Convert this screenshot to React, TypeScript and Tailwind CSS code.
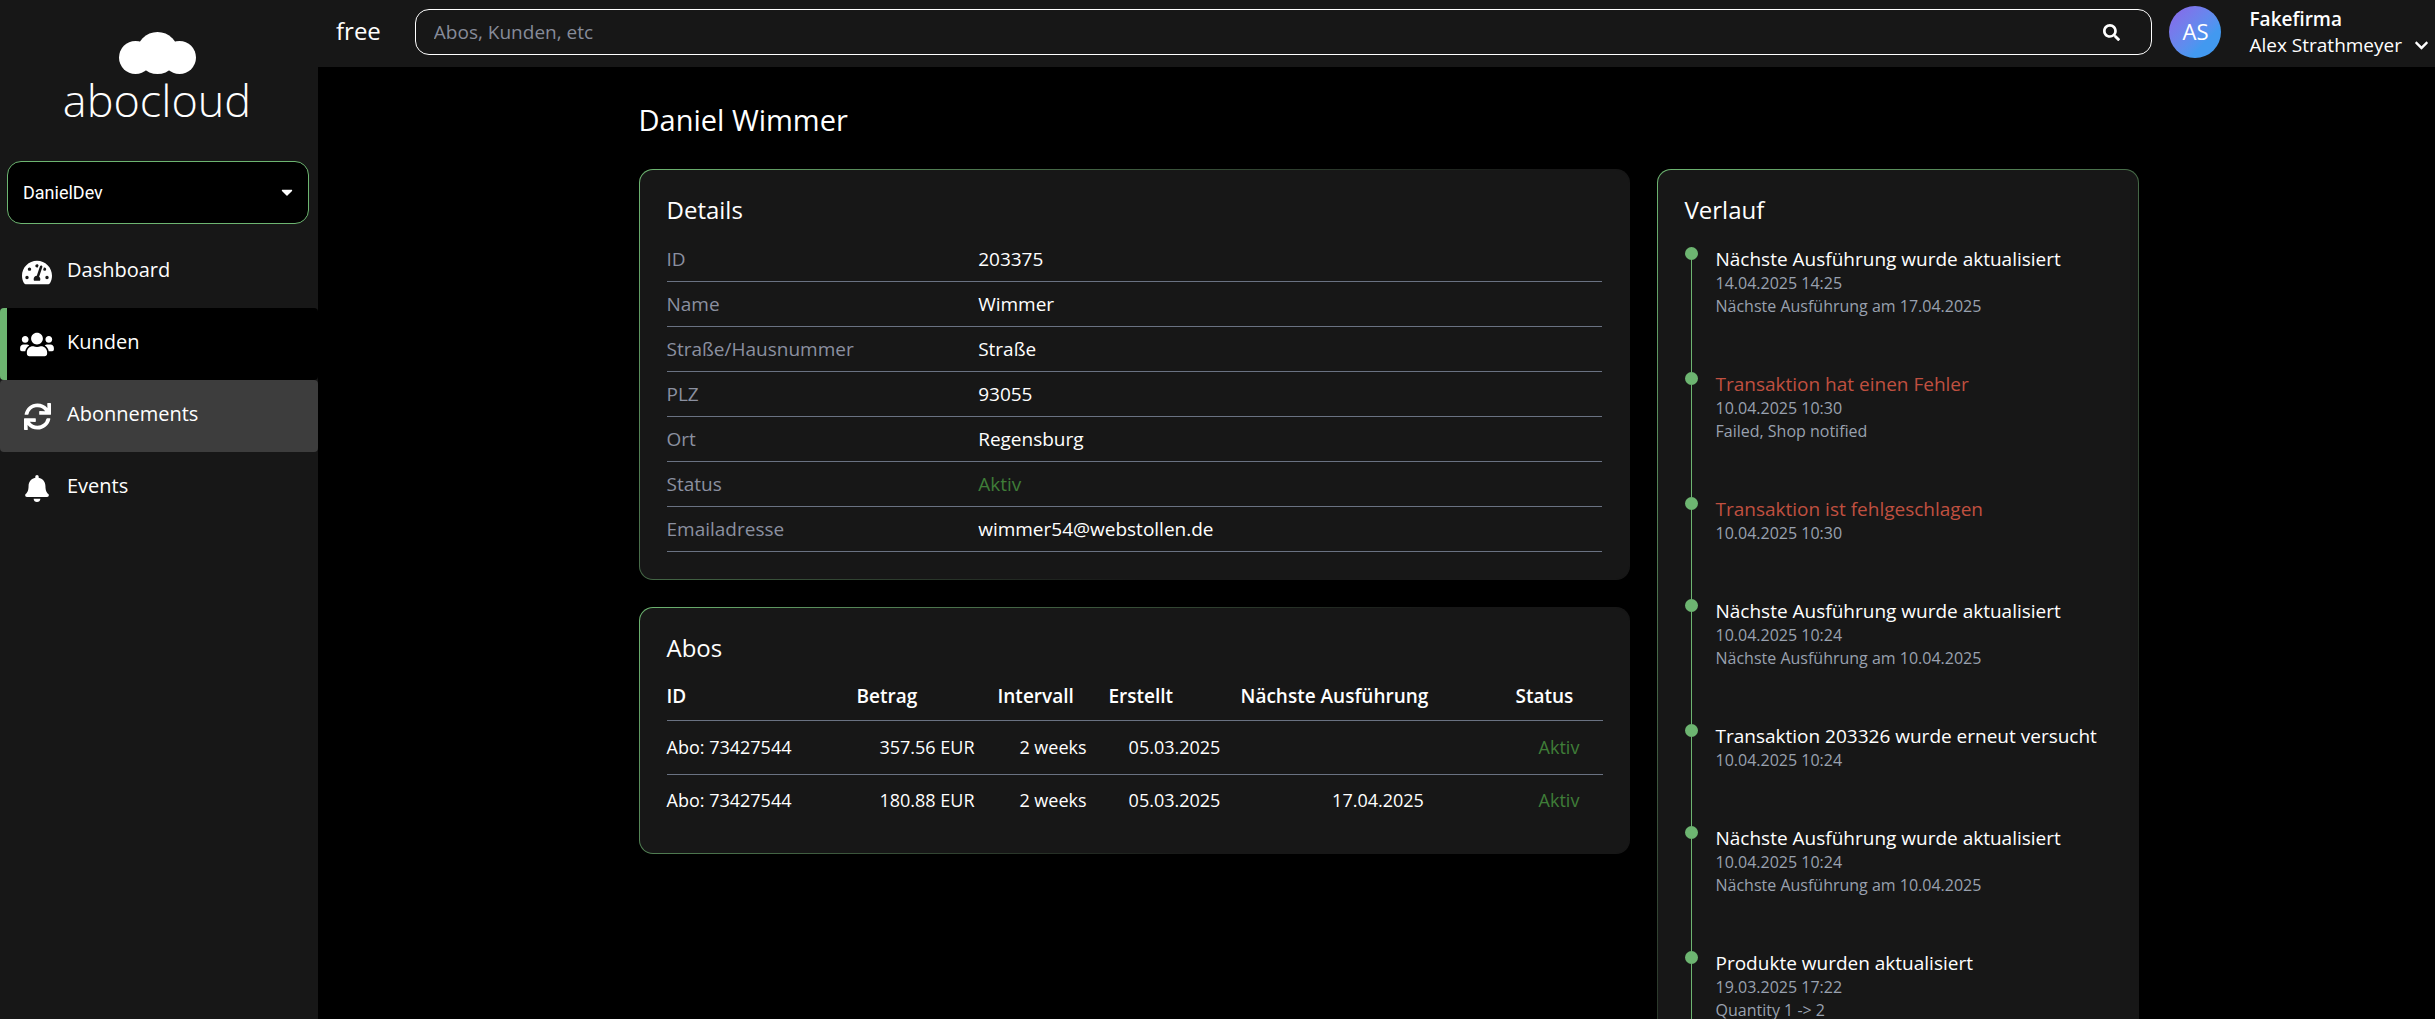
import type { ReactNode } from "react";
import clsx from "clsx";
import type { IconType } from "react-icons";
import {
  FaBell,
  FaCaretDown,
  FaChevronDown,
  FaSearch,
  FaSync,
  FaTachometerAlt,
  FaUsers,
} from "react-icons/fa";

interface NavItem {
  label: string;
  icon: IconType;
  iconClass: string;
  state?: "active" | "hover";
}

interface HistoryEntry {
  title: string;
  date: string;
  note?: string;
  failed?: boolean;
}

const navItems: NavItem[] = [
  { label: "Dashboard", icon: FaTachometerAlt, iconClass: "w-[30px]" },
  { label: "Kunden", icon: FaUsers, iconClass: "w-[34px]", state: "active" },
  { label: "Abonnements", icon: FaSync, iconClass: "w-[27px]", state: "hover" },
  { label: "Events", icon: FaBell, iconClass: "w-[24px]" },
];

const details = [
  { label: "ID", value: "203375" },
  { label: "Name", value: "Wimmer" },
  { label: "Straße/Hausnummer", value: "Straße" },
  { label: "PLZ", value: "93055" },
  { label: "Ort", value: "Regensburg" },
  { label: "Status", value: "Aktiv", active: true },
  { label: "Emailadresse", value: "wimmer54@webstollen.de" },
];

const subscriptions = [
  { id: "Abo: 73427544", amount: "357.56 EUR", interval: "2 weeks", created: "05.03.2025", next: "", status: "Aktiv" },
  { id: "Abo: 73427544", amount: "180.88 EUR", interval: "2 weeks", created: "05.03.2025", next: "17.04.2025", status: "Aktiv" },
];

const history: HistoryEntry[] = [
  { title: "Nächste Ausführung wurde aktualisiert", date: "14.04.2025 14:25", note: "Nächste Ausführung am 17.04.2025" },
  { title: "Transaktion hat einen Fehler", date: "10.04.2025 10:30", note: "Failed, Shop notified", failed: true },
  { title: "Transaktion ist fehlgeschlagen", date: "10.04.2025 10:30", failed: true },
  { title: "Nächste Ausführung wurde aktualisiert", date: "10.04.2025 10:24", note: "Nächste Ausführung am 10.04.2025" },
  { title: "Transaktion 203326 wurde erneut versucht", date: "10.04.2025 10:24" },
  { title: "Nächste Ausführung wurde aktualisiert", date: "10.04.2025 10:24", note: "Nächste Ausführung am 10.04.2025" },
  { title: "Produkte wurden aktualisiert", date: "19.03.2025 17:22", note: "Quantity 1 -> 2" },
];

function Logo() {
  return (
    <a href="#" className="flex flex-col items-center pr-1 pt-8" aria-label="abocloud">
      <svg viewBox="0 0 77 42" className="h-[42px] w-[77px] fill-white" aria-hidden="true">
        <circle cx="16.5" cy="25.5" r="16.5" />
        <circle cx="38.5" cy="21" r="21" />
        <circle cx="60.5" cy="25.5" r="16.5" />
      </svg>
      <span className="text-[45px] leading-[52px] font-light">abocloud</span>
    </a>
  );
}

function Sidebar() {
  return (
    <aside className="flex w-[318px] shrink-0 flex-col bg-[#171717]">
      <Logo />
      <div className="relative mt-[35px] mr-[9px] ml-[7px]">
        <select
          aria-label="Shop"
          className="h-[63px] w-full appearance-none rounded-[14px] border border-[#6db571] bg-black px-[15px] font-[Roboto,sans-serif] text-lg text-white"
        >
          <option>DanielDev</option>
        </select>
        <FaCaretDown className="pointer-events-none absolute top-[22px] right-[13px] h-[18px] w-[18px]" />
      </div>
      <nav className="mt-3">
        {navItems.map(({ label, icon: Icon, iconClass, state }) => (
          <a
            key={label}
            href="#"
            className={clsx(
              "flex h-[72px] items-center rounded border-l-[7px] pl-[13px]",
              state === "active" && "border-[#6db571] bg-black",
              state === "hover" && "border-[#3d3d3d] bg-[#3d3d3d]",
              !state && "border-transparent"
            )}
          >
            <span className="flex w-[34px] justify-center">
              <Icon className={clsx("h-[27px] shrink-0", iconClass)} />
            </span>
            <span className="ml-[13px] pb-1 text-xl font-medium">{label}</span>
          </a>
        ))}
      </nav>
    </aside>
  );
}

function Header() {
  return (
    <header className="flex h-[67px] shrink-0 items-center bg-[#171717] pr-[6px] pb-[3px] pl-[18px]">
      <span className="pb-0.5 text-2xl leading-6 font-medium">free</span>
      <form className="mr-[17px] ml-[34px] flex h-[46px] flex-1 items-center rounded-[14px] border border-white pr-[31px] pl-[18px]">
        <input
          type="search"
          aria-label="Suche"
          placeholder="Abos, Kunden, etc"
          className="h-full flex-1 bg-transparent text-[19px] outline-none placeholder:text-[#868b99]"
        />
        <button type="button" aria-label="Suchen">
          <FaSearch className="h-[17px] w-[17px]" />
        </button>
      </form>
      <span className="flex h-[52px] w-[52px] items-center justify-center rounded-full bg-linear-135 from-[#8a63e8] to-[#4299f0] to-70% pb-0.5 text-[22px] font-medium">
        AS
      </span>
      <button type="button" className="ml-7 flex items-end gap-3 text-left">
        <span className="flex flex-col text-[19px] leading-[26px]">
          <span className="font-semibold">Fakefirma</span>
          <span>Alex Strathmeyer</span>
        </span>
        <FaChevronDown className="mb-[5px] h-[15px] w-[15px]" />
      </button>
    </header>
  );
}

function Card({ title, className, children }: { title: string; className?: string; children: ReactNode }) {
  return (
    <section className="rounded-[14px] bg-linear-135 from-[#6db571] to-[#171717] to-65% p-px">
      <div className={clsx("rounded-[13px] bg-[#171717] p-[27px]", className)}>
        <h2 className="mb-[14px] text-2xl leading-[26px] font-medium">{title}</h2>
        {children}
      </div>
    </section>
  );
}

function DetailsCard() {
  return (
    <Card title="Details">
      <dl>
        {details.map((row) => (
          <div key={row.label} className="grid h-[45px] grid-cols-3 items-center border-b border-gray-500 text-[19px]">
            <dt className="text-[#8b90a0]">{row.label}</dt>
            <dd className={clsx("col-span-2", row.active && "text-[#3f7d38]")}>{row.value}</dd>
          </div>
        ))}
      </dl>
    </Card>
  );
}

function SubscriptionsCard() {
  return (
    <Card title="Abos">
      <table className="w-full table-fixed border-collapse text-lg">
        <thead>
          <tr className="h-[45px] border-b border-gray-500 text-left text-[19px]">
            <th className="w-[190px] font-semibold">ID</th>
            <th className="w-[141px] font-semibold">Betrag</th>
            <th className="w-[111px] font-semibold">Intervall</th>
            <th className="w-[132px] font-semibold">Erstellt</th>
            <th className="w-[275px] font-semibold">Nächste Ausführung</th>
            <th className="w-[87px] font-semibold">Status</th>
          </tr>
        </thead>
        <tbody>
          {subscriptions.map((sub, index) => (
            <tr key={index} className="h-[54px] border-b border-gray-500 text-center last:h-[52px] last:border-0">
              <td className="text-left">{sub.id}</td>
              <td>{sub.amount}</td>
              <td>{sub.interval}</td>
              <td>{sub.created}</td>
              <td>{sub.next}</td>
              <td className="text-[#3f7d38]">{sub.status}</td>
            </tr>
          ))}
        </tbody>
      </table>
    </Card>
  );
}

function HistoryCard() {
  return (
    <Card title="Verlauf" className="min-h-[1210px]">
      <ol className="mt-6">
        {history.map((entry, index) => (
          <li key={index} className="flex gap-[18px]">
            <span className="flex w-[13px] flex-col items-center" aria-hidden="true">
              <span className="h-[13px] w-[13px] shrink-0 rounded-full bg-[#6db571]" />
              <span className="w-px flex-1 bg-[#6db571]" />
            </span>
            <div className="pb-[54px] text-base leading-[23px] text-gray-400">
              <h3 className={clsx("text-[19px] leading-[25px]", entry.failed ? "text-[#c05040]" : "text-white")}>
                {entry.title}
              </h3>
              <p>{entry.date}</p>
              {entry.note && <p>{entry.note}</p>}
            </div>
          </li>
        ))}
      </ol>
    </Card>
  );
}

export default function App() {
  return (
    <div className="flex h-screen overflow-hidden bg-black font-['Open_Sans',sans-serif] text-white">
      <Sidebar />
      <div className="flex min-w-0 flex-1 flex-col">
        <Header />
        <main className="flex-1 overflow-hidden pl-6">
          <div className="mx-auto max-w-[1500px]">
            <h1 className="pt-[34px] text-[29px] leading-[38px]">Daniel Wimmer</h1>
            <div className="mt-[30px] grid grid-cols-3 items-start gap-[27px]">
              <div className="col-span-2 flex flex-col gap-[27px]">
                <DetailsCard />
                <SubscriptionsCard />
              </div>
              <HistoryCard />
            </div>
          </div>
        </main>
      </div>
    </div>
  );
}
